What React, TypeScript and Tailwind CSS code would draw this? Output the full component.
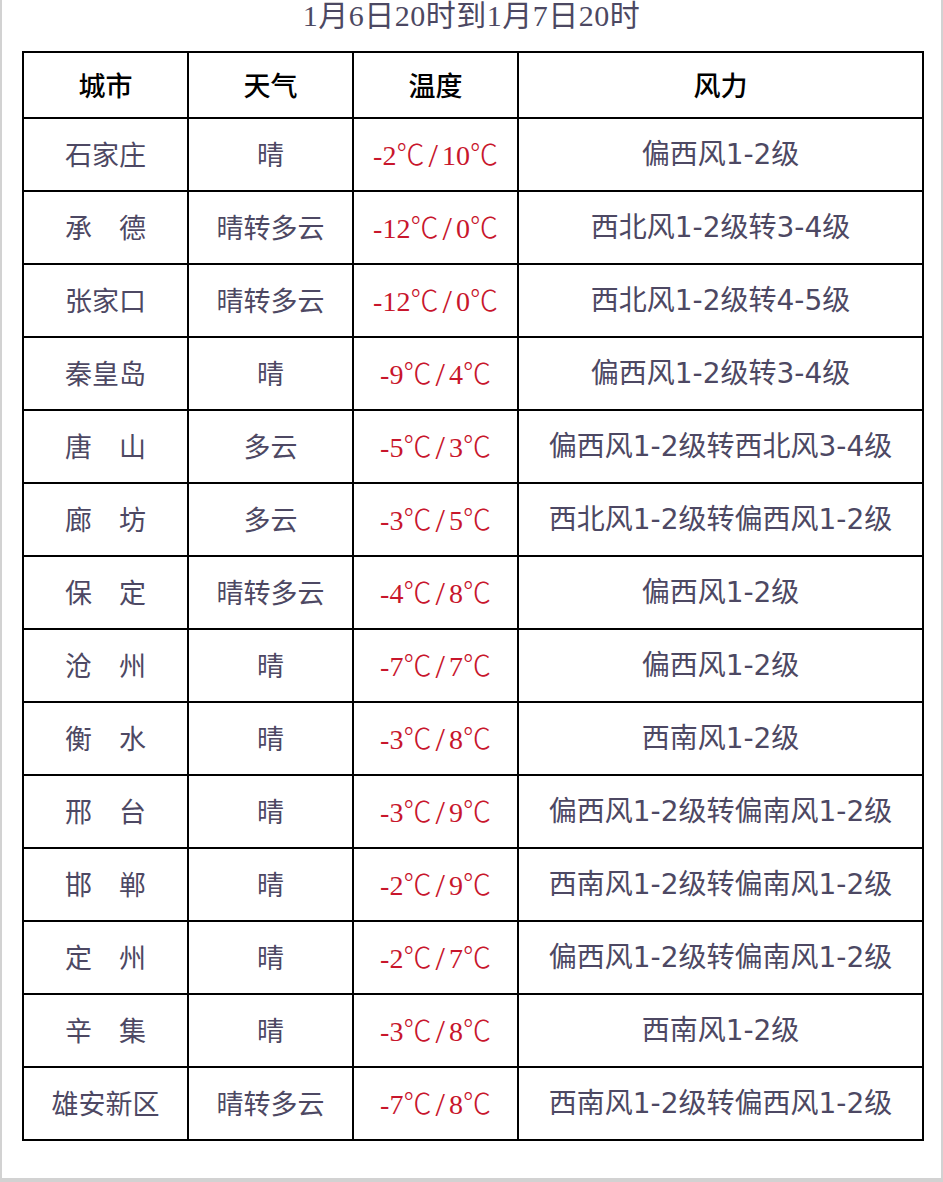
import React from "react";

interface Row {
  city: string;
  weather: string;
  low: string;
  high: string;
  wind: string;
}

const rows: Row[] = [
  { city: "石家庄", weather: "晴", low: "-2", high: "10", wind: "偏西风1-2级" },
  { city: "承　德", weather: "晴转多云", low: "-12", high: "0", wind: "西北风1-2级转3-4级" },
  { city: "张家口", weather: "晴转多云", low: "-12", high: "0", wind: "西北风1-2级转4-5级" },
  { city: "秦皇岛", weather: "晴", low: "-9", high: "4", wind: "偏西风1-2级转3-4级" },
  { city: "唐　山", weather: "多云", low: "-5", high: "3", wind: "偏西风1-2级转西北风3-4级" },
  { city: "廊　坊", weather: "多云", low: "-3", high: "5", wind: "西北风1-2级转偏西风1-2级" },
  { city: "保　定", weather: "晴转多云", low: "-4", high: "8", wind: "偏西风1-2级" },
  { city: "沧　州", weather: "晴", low: "-7", high: "7", wind: "偏西风1-2级" },
  { city: "衡　水", weather: "晴", low: "-3", high: "8", wind: "西南风1-2级" },
  { city: "邢　台", weather: "晴", low: "-3", high: "9", wind: "偏西风1-2级转偏南风1-2级" },
  { city: "邯　郸", weather: "晴", low: "-2", high: "9", wind: "西南风1-2级转偏南风1-2级" },
  { city: "定　州", weather: "晴", low: "-2", high: "7", wind: "偏西风1-2级转偏南风1-2级" },
  { city: "辛　集", weather: "晴", low: "-3", high: "8", wind: "西南风1-2级" },
  { city: "雄安新区", weather: "晴转多云", low: "-7", high: "8", wind: "西南风1-2级转偏西风1-2级" },
];

const cjk = "font-['Noto_Sans_CJK_SC',sans-serif]";
const serif = "font-['Liberation_Serif','Noto_Sans_CJK_SC',serif]";
const sans = "font-['DejaVu_Sans','Noto_Sans_CJK_SC',sans-serif]";

function Celsius() {
  return <span className={`font-light ${cjk}`}>℃</span>;
}

export default function App() {
  return (
    <div className="w-[943px] h-[1182px] bg-white border-x-2 border-b-4 border-[#d2d2d2] overflow-hidden">
      {/* Title */}
      <div
        className={`h-[51px] pt-[1px] text-center text-[30px] leading-[30px] tracking-[0.5px] text-[#4c4862] ${serif}`}
      >
        1月6日20时到1月7日20时
      </div>

      {/* Table */}
      <table className="ml-[20px] border-collapse table-fixed w-[900px] text-[27px]">
        <colgroup>
          <col className="w-[165px]" />
          <col className="w-[165px]" />
          <col className="w-[165px]" />
          <col className="w-[405px]" />
        </colgroup>
        <thead>
          <tr className="h-[66px]">
            {["城市", "天气", "温度", "风力"].map((h) => (
              <th
                key={h}
                className={`border-2 border-black text-black font-medium text-center ${cjk}`}
              >
                {h}
              </th>
            ))}
          </tr>
        </thead>
        <tbody>
          {rows.map((r) => (
            <tr key={r.city} className="h-[73px]">
              <td className={`border-2 border-black text-center text-[#4d4863] ${cjk}`}>{r.city}</td>
              <td className={`border-2 border-black text-center text-[#4d4863] ${cjk}`}>{r.weather}</td>
              <td className={`border-2 border-black text-center text-[28px] text-[#c8162c] ${serif}`}>
                {r.low}
                <Celsius />
                <span className="mx-[4px] text-[34px] leading-none relative top-[2px]">/</span>
                {r.high}
                <Celsius />
              </td>
              <td className={`border-2 border-black text-center text-[28px] text-[#4d4863] ${sans}`}>
                {r.wind}
              </td>
            </tr>
          ))}
        </tbody>
      </table>
    </div>
  );
}
